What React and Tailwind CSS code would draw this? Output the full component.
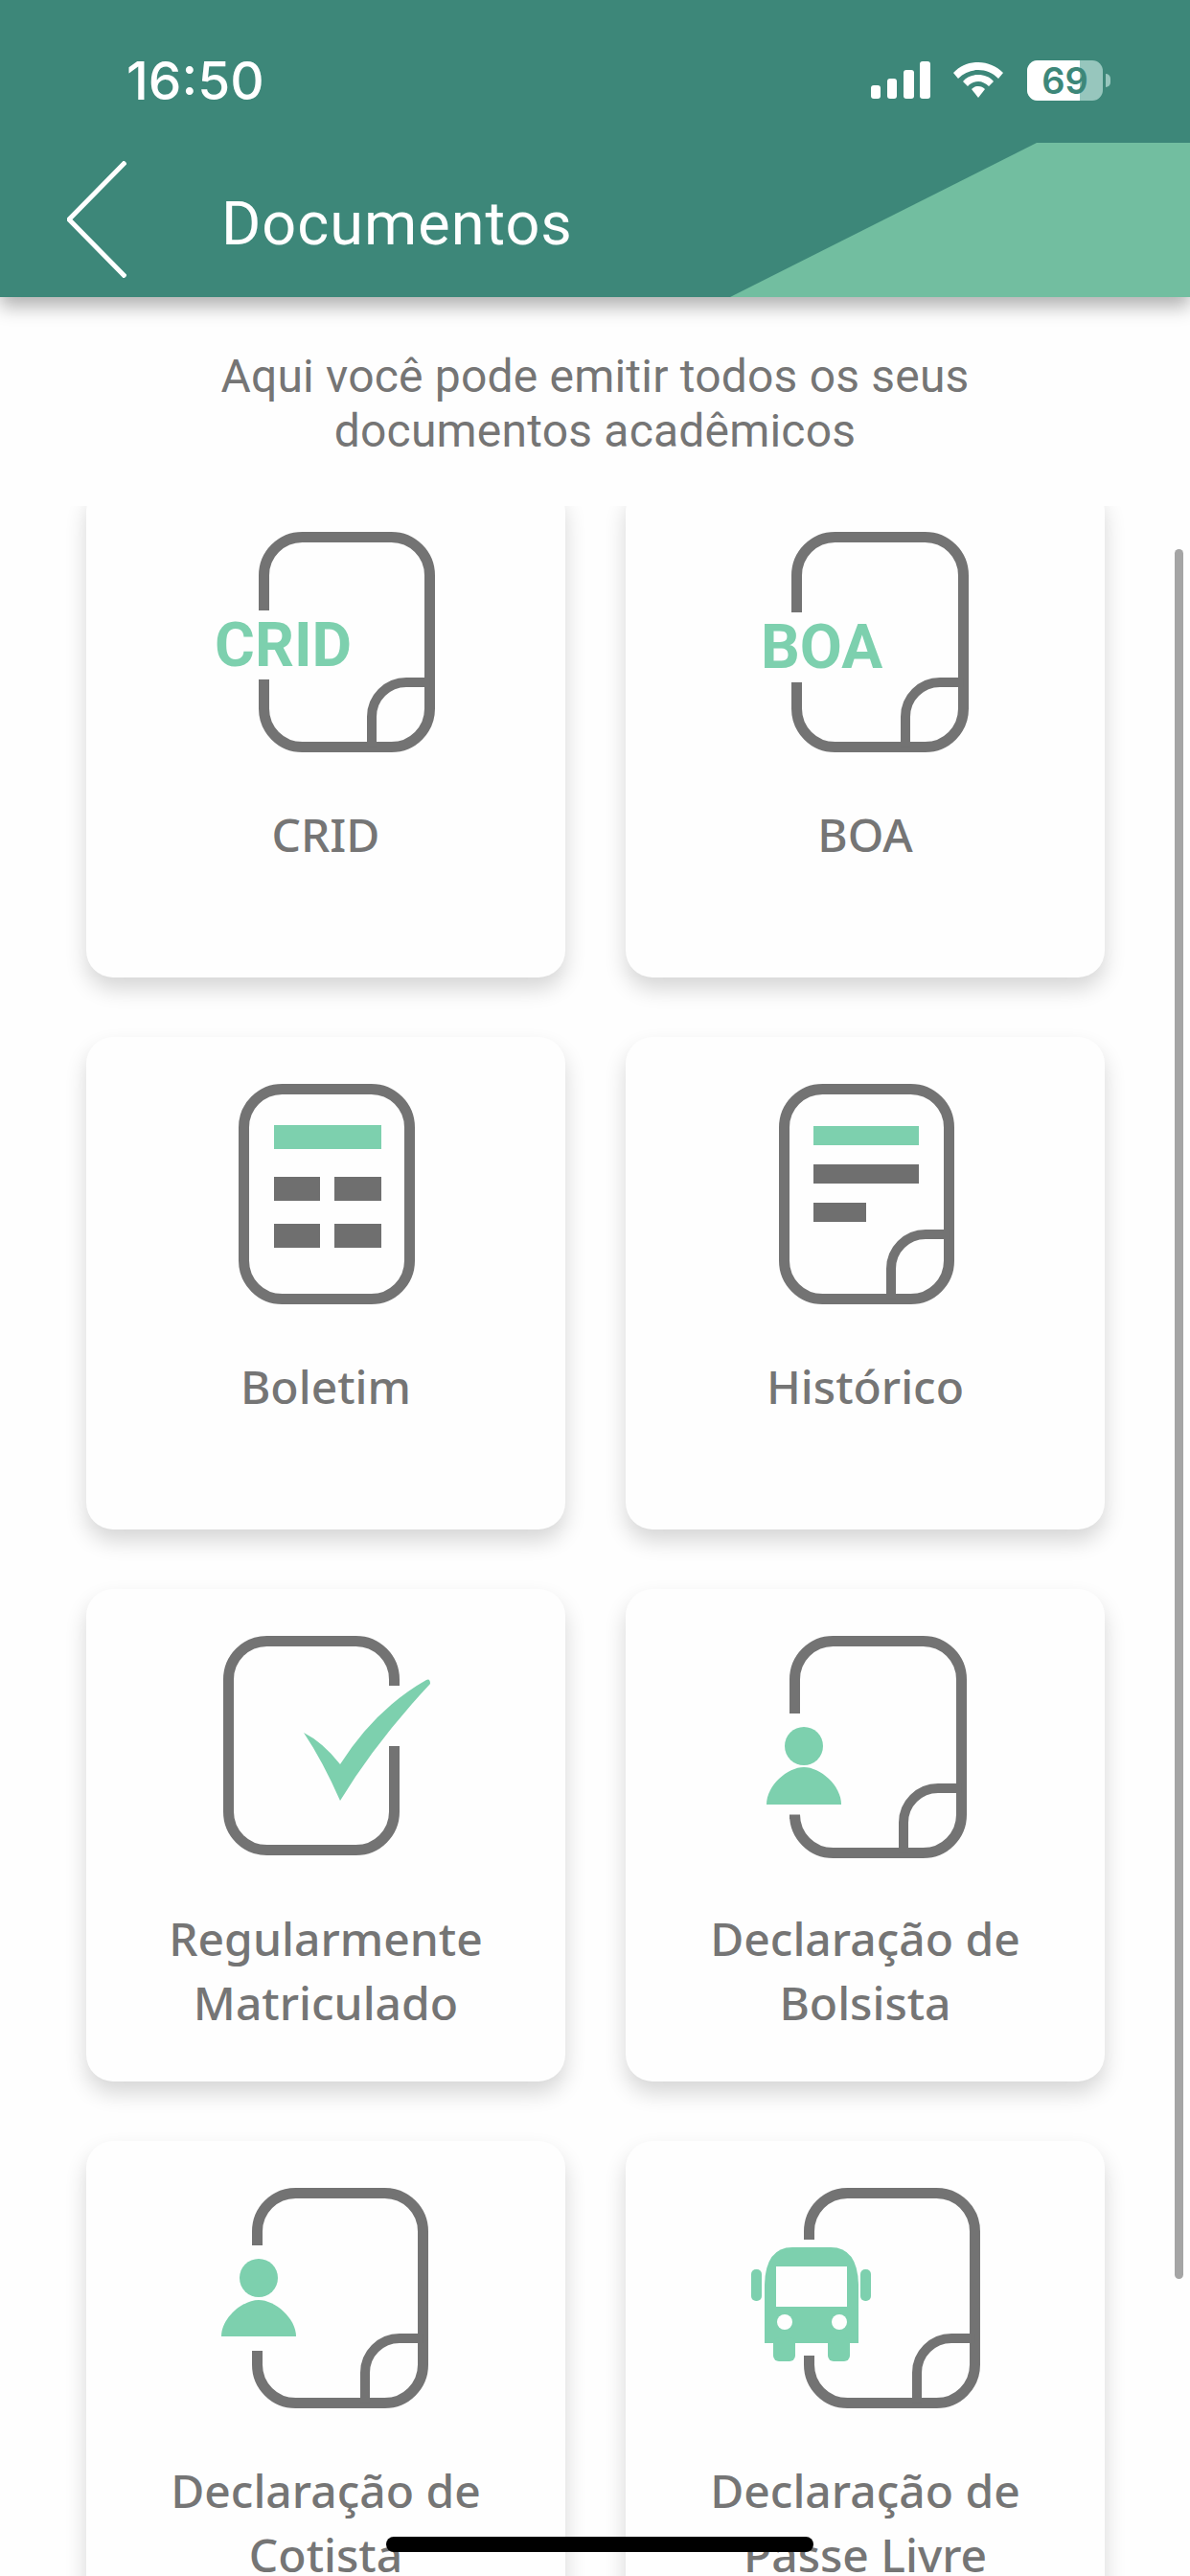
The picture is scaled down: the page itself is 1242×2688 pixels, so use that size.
const STROKE = '#737373'
const GREEN = '#7dd0ae'

// contorno do documento, com abertura opcional na esquerda ou na direita
function Doc({ x, y = 49, w = 184, h = 230, gapLeft, gapRight, fold = true }) {
  const r = 40
  const s = 5.5
  const l = x + s
  const t = y + s
  const rt = x + w - s
  const b = y + h - s
  const corners = (start, end) =>
    `M${l} ${start} V${t + r} A${r} ${r} 0 0 1 ${l + r} ${t} H${rt - r} A${r} ${r} 0 0 1 ${rt} ${t + r} V${end}`
  let d
  if (gapLeft) {
    d = `${corners(gapLeft[0], b - r)} A${r} ${r} 0 0 1 ${rt - r} ${b} H${l + r} A${r} ${r} 0 0 1 ${l} ${b - r} V${gapLeft[1]}`
  } else if (gapRight) {
    d = `M${rt} ${gapRight[1]} V${b - r} A${r} ${r} 0 0 1 ${rt - r} ${b} H${l + r} A${r} ${r} 0 0 1 ${l} ${b - r} V${t + r} A${r} ${r} 0 0 1 ${l + r} ${t} H${rt - r} A${r} ${r} 0 0 1 ${rt} ${t + r} V${gapRight[0]}`
  } else {
    d = `${corners(b - r, b - r)} A${r} ${r} 0 0 1 ${rt - r} ${b} H${l + r} A${r} ${r} 0 0 1 ${l} ${b - r} Z`
  }
  const fx = x + w - 66
  const fy = y + h - 73
  return (
    <g fill="none" stroke={STROKE} strokeWidth="11">
      <path d={d} />
      {fold && <path strokeWidth="10" d={`M${fx} ${b} V${fy + 36} A36 36 0 0 1 ${fx + 36} ${fy} H${rt}`} />}
    </g>
  )
}

function Person({ cx, headY, top, bottom }) {
  return (
    <g fill={GREEN}>
      <circle cx={cx} cy={headY} r="20" />
      <path d={`M${cx - 39} ${bottom} C${cx - 39} ${top + 19} ${cx - 17} ${top} ${cx} ${top} C${cx + 17} ${top} ${cx + 39} ${top + 19} ${cx + 39} ${bottom} Z`} />
    </g>
  )
}

function IconText({ x, y, children }) {
  return (
    <text x={x} y={y} fill={GREEN} fontFamily="Roboto, sans-serif" fontWeight="700" fontSize="64">
      {children}
    </text>
  )
}

const cards = [
  {
    label: ['CRID'],
    icon: (
      <>
        <Doc x={180} gapLeft={[131, 203]} />
        <IconText x={134} y={189}>CRID</IconText>
      </>
    ),
  },
  {
    label: ['BOA'],
    icon: (
      <>
        <Doc x={173} w={185} gapLeft={[133, 206]} />
        <IconText x={141} y={191}>BOA</IconText>
      </>
    ),
  },
  {
    label: ['Boletim'],
    icon: (
      <>
        <Doc x={159} w={184} fold={false} />
        <rect x="196" y="92" width="112" height="25" fill={GREEN} />
        <g fill="#6f6f6f">
          <rect x="196" y="146" width="48" height="25" />
          <rect x="259" y="146" width="49" height="25" />
          <rect x="196" y="195" width="48" height="25" />
          <rect x="259" y="195" width="49" height="25" />
        </g>
      </>
    ),
  },
  {
    label: ['Histórico'],
    icon: (
      <>
        <Doc x={160} w={183} />
        <rect x="196" y="93" width="110" height="20" fill={GREEN} />
        <rect x="196" y="133" width="110" height="20" fill="#6f6f6f" />
        <rect x="196" y="173" width="55" height="20" fill="#6f6f6f" />
      </>
    ),
  },
  {
    label: ['Regularmente', 'Matriculado'],
    icon: (
      <>
        <Doc x={143} h={229} gapRight={[101, 164]} fold={false} />
        <path fill={GREEN} d="M227 150 Q247 160 265 183 Q302 125 355 95 Q359 93 359 99 Q302 160 265 221 Q247 180 227 150 Z" />
      </>
    ),
  },
  {
    label: ['Declaração de', 'Bolsista'],
    icon: (
      <>
        <Doc x={171} w={185} h={232} gapLeft={[130, 240]} />
        <Person cx={186} headY={164} top={186} bottom={225} />
      </>
    ),
  },
  {
    label: ['Declaração de', 'Cotista'],
    icon: (
      <>
        <Doc x={173} gapLeft={[109, 219]} />
        <Person cx={180} headY={143} top={166} bottom={204} />
      </>
    ),
  },
  {
    label: ['Declaração de', 'Passe Livre'],
    icon: (
      <>
        <Doc x={186} gapLeft={[103, 224]} />
        <g transform="translate(-4 0)">
          <g fill={GREEN}>
            <path d="M149 211 V150 Q150 111 178 111 H218 Q246 111 247 150 V211 Z" />
            <rect x="158" y="205" width="23" height="25" rx="6" />
            <rect x="215" y="205" width="23" height="25" rx="6" />
            <rect x="135" y="134" width="11" height="33" rx="5" />
            <rect x="249" y="134" width="11" height="33" rx="5" />
          </g>
          <g fill="#fefefe">
            <rect x="161" y="131" width="74" height="42" />
            <circle cx="170" cy="189" r="8" />
            <circle cx="227" cy="189" r="8" />
          </g>
        </g>
      </>
    ),
  },
]

function Card({ label, icon }) {
  return (
    <div className="h-[514px] w-[500px] rounded-[28px] bg-[#fefefe] shadow-[0_12px_22px_rgba(0,0,0,0.16)]">
      <svg width="500" height="331" viewBox="0 0 500 331" className="block">
        {icon}
      </svg>
      <div className="text-center font-['Noto_Sans',sans-serif] text-[48px] leading-[67px] font-medium text-[#757575]">
        {label.map((line) => (
          <div key={line}>{line}</div>
        ))}
      </div>
    </div>
  )
}

function StatusIcons() {
  return (
    <div className="flex items-center">
      <svg width="62" height="40" viewBox="0 0 62 40" fill="#fff" className="block">
        <rect x="0" y="25" width="10" height="14" rx="3" />
        <rect x="17" y="18" width="10" height="21" rx="3" />
        <rect x="34" y="9" width="11" height="30" rx="3" />
        <rect x="51" y="0" width="11" height="39" rx="3" />
      </svg>
      <svg width="52" height="38" viewBox="0 0 52 38" className="ml-[24px] block" fill="#fff">
        <path d="M26 0 C36 0 45 4 52 11 L47 17 C41 11 34 8 26 8 C18 8 11 11 5 17 L0 11 C7 4 16 0 26 0 Z" />
        <path d="M26 13 C32 13 38 15 42 20 L37 25 C34 22 30 20 26 20 C22 20 18 22 15 25 L10 20 C14 15 20 13 26 13 Z" />
        <path d="M26 25 C29 25 31 26 33 28 L26 37 L19 28 C21 26 23 25 26 25 Z" />
      </svg>
      <div className="relative ml-[25px] h-[42px] w-[79px] rounded-[11px] bg-[#97c6bd]">
        <div className="h-full w-[55px] rounded-l-[11px] bg-white" />
        <div className="absolute inset-0 flex items-center justify-center font-['Inter',sans-serif] text-[38px] leading-none font-semibold text-[#3d8779]">
          69
        </div>
      </div>
      <div className="ml-[3px] h-[14px] w-[5px] rounded-r-full bg-[#97c6bd]" />
    </div>
  )
}

export default function App() {
  return (
    <div className="relative flex h-[2688px] w-[1242px] flex-col overflow-hidden bg-[#fefefe]">
      <header className="relative z-10 h-[310px] shrink-0 bg-[#3d8779] shadow-[0_10px_18px_rgba(0,0,0,0.3)]">
        {/* faixa clara do canto */}
        <svg width="480" height="161" viewBox="0 0 480 161" className="absolute right-0 bottom-0 block">
          <polygon points="0,161 320,0 480,0 480,161" fill="#72bea0" />
        </svg>
        <div className="relative flex h-[168px] items-center justify-between pr-[83px] pl-[132px]">
          <span className="font-['Inter',sans-serif] text-[55px] leading-none font-medium text-white">16:50</span>
          <StatusIcons />
        </div>
        <div className="relative flex h-[122px] items-center pl-[70px]">
          <svg width="62" height="122" viewBox="0 0 62 122" fill="none" stroke="#fff" strokeWidth="5" className="block">
            <path d="M61 1 L2 61 L61 121" />
          </svg>
          <h1 className="mt-[8px] ml-[99px] font-['Roboto',sans-serif] text-[63px] leading-none font-normal tracking-[1px] text-white">
            Documentos
          </h1>
        </div>
      </header>

      <p className="mt-[54px] shrink-0 text-center font-['Roboto',sans-serif] text-[48px] leading-[57px] font-normal tracking-[0.2px] text-[#757575]">
        Aqui você pode emitir todos os seus
        <br />
        documentos acadêmicos
      </p>

      <div className="mt-[50px] min-h-0 flex-1 overflow-hidden">
        <div className="-mt-[22px] grid grid-cols-[500px_500px] gap-x-[63px] gap-y-[62px] pl-[90px]">
          {cards.map((card) => (
            <Card key={card.label.join(' ')} label={card.label} icon={card.icon} />
          ))}
        </div>
      </div>

      {/* barra de rolagem e indicador home ficam sobre a lista */}
      <div className="absolute top-[573px] left-[1226px] h-[1805px] w-[9px] rounded-full bg-[#a5a5a5]" />
      <div className="absolute top-[2647px] left-[403px] h-[16px] w-[446px] rounded-full bg-black" />
    </div>
  )
}
